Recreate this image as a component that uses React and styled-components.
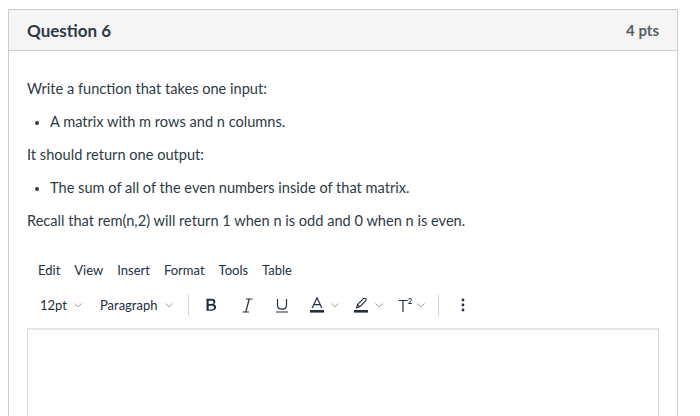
import React from "react";
import styled, { createGlobalStyle } from "styled-components";

const GlobalStyle = createGlobalStyle`
  body {
    margin: 0;
    background: #fff;
    font-family: Lato, "Open Sans", sans-serif;
    color: #2d3b45;
  }
`;

const Page = styled.div`
  padding: 9px 0 0 8px;
  height: 416px;
  box-sizing: border-box;
  overflow: hidden;
`;

const Card = styled.div`
  width: 670px;
  box-sizing: border-box;
  border: 1px solid #c7cdd1;
  border-bottom: none;
  height: 420px;
`;

const Header = styled.div`
  display: flex;
  align-items: center;
  justify-content: space-between;
  height: 40px;
  padding: 0 18px;
  background: #f5f5f5;
  border-bottom: 1px solid #c7cdd1;
`;

const Title = styled.div`
  font-size: 17px;
  font-weight: 700;
  color: #2d3b45;
`;

const Points = styled.div`
  font-size: 15px;
  font-weight: 700;
  color: #565e63;
`;

const Body = styled.div`
  padding: 30px 18px 0 18px;
`;

const Para = styled.p`
  margin: 0 0 17px 0;
  font-size: 14.6px;
  line-height: 16px;
`;

const List = styled.ul`
  margin: 0 0 17px 0;
  padding-left: 23px;
  font-size: 14.6px;
  line-height: 16px;
  li::marker {
    font-size: 12px;
  }
`;

const MenuBar = styled.div`
  display: flex;
  gap: 14px;
  padding: 16px 0 0 11px;
  font-size: 13px;
  color: #222f3e;
`;

const MenuItem = styled.span``;

const Toolbar = styled.div`
  display: flex;
  align-items: center;
  height: 30px;
  margin-top: 12px;
  padding-left: 13px;
  font-size: 13px;
  color: #222f3e;
`;

const Select = styled.div`
  display: flex;
  align-items: center;
  gap: 7px;
  margin-right: ${(p) => p.$mr || 16}px;
`;

const Separator = styled.div`
  width: 1px;
  height: 21px;
  background: #d4d4d4;
  margin: 0 ${(p) => p.$right || 0}px 0 ${(p) => p.$left || 0}px;
`;

const Tool = styled.div`
  display: flex;
  align-items: center;
  justify-content: ${(p) => (p.$split ? "flex-start" : "center")};
  box-sizing: border-box;
  width: ${(p) => p.$w || 35}px;
  padding-left: ${(p) => p.$pl || 0}px;
  gap: ${(p) => p.$gap || 0}px;
`;

const EditorBox = styled.div`
  margin-top: 8px;
  width: 632px;
  height: 120px;
  box-sizing: border-box;
  border: 1px solid #d9d9d9;
  border-top: 2px solid #e6e6e6;
`;

const Chevron = () => (
  <svg width="8" height="5" viewBox="0 0 8 5">
    <path d="M.5.5L4 4 7.5.5" fill="none" stroke="#9aa0a6" strokeWidth="1" />
  </svg>
);

const Bold = () => (
  <svg width="14" height="15" viewBox="0 0 14 15">
    <path
      d="M1.5 .8h5.3c2.3 0 3.6 1.1 3.6 2.9 0 1.2-.7 2.1-1.7 2.5 1.4.3 2.4 1.4 2.4 2.9 0 2.2-1.6 3.6-4.1 3.6H1.5zm2.2 2v3.1h3c1.2 0 1.8-.6 1.8-1.6S7.9 2.8 6.7 2.8zm0 5v3.6H7c1.3 0 2-.6 2-1.8s-.7-1.8-2-1.8z"
      fill="#222f3e"
    />
  </svg>
);

const Italic = () => (
  <svg width="11" height="15" viewBox="0 0 11 15">
    <path d="M4 1h6.5M.5 14H7M7.2 1L3.8 14" fill="none" stroke="#222f3e" strokeWidth="1.2" />
  </svg>
);

const Underline = () => (
  <svg width="14" height="15" viewBox="0 0 14 15">
    <path d="M2.5 1v6.2c0 2.5 1.7 3.9 4.5 3.9s4.5-1.4 4.5-3.9V1M1 14h12" fill="none" stroke="#222f3e" strokeWidth="1.2" />
  </svg>
);

const TextColor = () => (
  <svg width="14" height="16" viewBox="0 0 14 16">
    <path d="M2.2 11L7 .8 11.8 11M3.8 7.6h6.4" fill="none" stroke="#222f3e" strokeWidth="1.2" />
    <rect x="0" y="13" width="14" height="2.6" fill="#222f3e" />
  </svg>
);

const Highlight = () => (
  <svg width="14" height="16" viewBox="0 0 14 16">
    <path
      d="M2.5 11l1-3.4 5.9-5.9c.6-.6 1.6-.6 2.2 0 .6.6.6 1.6 0 2.2L5.7 9.8zM3.6 7.6l2.1 2.2"
      fill="none"
      stroke="#222f3e"
      strokeWidth="1.2"
      strokeLinejoin="round"
    />
    <rect x="0" y="13" width="14" height="2.6" fill="#222f3e" />
  </svg>
);

const Superscript = () => (
  <svg width="15" height="15" viewBox="0 0 15 15">
    <path d="M.5 2.5h9M5 2.5V14" fill="none" stroke="#222f3e" strokeWidth="1.2" />
    <text x="10" y="6" fontSize="7" fontFamily="Lato, sans-serif" fontWeight="700" fill="#222f3e">
      2
    </text>
  </svg>
);

const More = () => (
  <svg width="4" height="16" viewBox="0 0 4 16">
    <circle cx="2" cy="3" r="1.4" fill="#222f3e" />
    <circle cx="2" cy="8" r="1.4" fill="#222f3e" />
    <circle cx="2" cy="13" r="1.4" fill="#222f3e" />
  </svg>
);

export default function App() {
  return (
    <>
      <GlobalStyle />
      <Page>
        <Card>
          <Header>
            <Title>Question 6</Title>
            <Points>4 pts</Points>
          </Header>
          <Body>
            <Para>Write a function that takes one input:</Para>
            <List>
              <li>A matrix with m rows and n columns.</li>
            </List>
            <Para>It should return one output:</Para>
            <List>
              <li>The sum of all of the even numbers inside of that matrix.</li>
            </List>
            <Para>Recall that rem(n,2) will return 1 when n is odd and 0 when n is even.</Para>
            <MenuBar>
              {["Edit", "View", "Insert", "Format", "Tools", "Table"].map((m) => (
                <MenuItem key={m}>{m}</MenuItem>
              ))}
            </MenuBar>
            <Toolbar>
              <Select $mr={18}>
                <span>12pt</span>
                <Chevron />
              </Select>
              <Select $mr={15}>
                <span>Paragraph</span>
                <Chevron />
              </Select>
              <Separator $right={6} />
              <Tool>
                <Bold />
              </Tool>
              <Tool>
                <Italic />
              </Tool>
              <Tool>
                <Underline />
              </Tool>
              <Tool $split $w={44} $pl={10} $gap={7}>
                <TextColor />
                <Chevron />
              </Tool>
              <Tool $split $w={44} $pl={10} $gap={7}>
                <Highlight />
                <Chevron />
              </Tool>
              <Tool $split $w={44} $pl={10} $gap={4}>
                <Superscript />
                <Chevron />
              </Tool>
              <Separator $left={6} $right={18} />
              <Tool $w={12}>
                <More />
              </Tool>
            </Toolbar>
            <EditorBox />
          </Body>
        </Card>
      </Page>
    </>
  );
}
